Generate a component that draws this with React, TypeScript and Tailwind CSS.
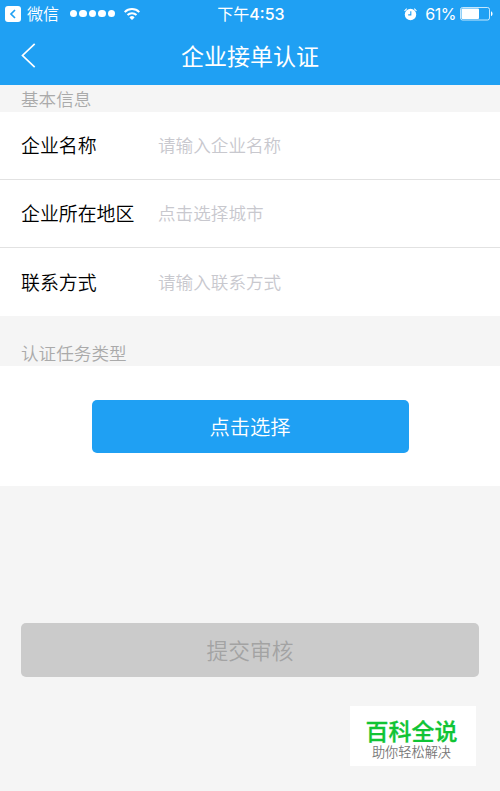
interface FieldRowProps {
  label: string;
  placeholder: string;
}

const fields: FieldRowProps[] = [
  { label: '企业名称', placeholder: '请输入企业名称' },
  { label: '企业所在地区', placeholder: '点击选择城市' },
  { label: '联系方式', placeholder: '请输入联系方式' },
];

function StatusBar() {
  return (
    <div className="grid grid-cols-[1fr_auto_1fr] items-center h-[27px] pl-[5px] pr-[7px]">
      <div className="flex items-center">
        <svg className="w-4 h-4" viewBox="0 0 16 16">
          <rect width="16" height="16" rx="3" fill="#fff" />
          <path d="M10 4 6 8l4 4" fill="none" stroke="#1fa0f3" strokeWidth="1.7" />
        </svg>
        <span className="ml-1.5 w-8 text-[16px] font-[350] leading-none -translate-y-px">微信</span>
        <div className="flex ml-[11px] gap-[2px]">
          {[0, 1, 2, 3, 4].map((dot) => (
            <span key={dot} className="w-[7.4px] h-[7.4px] rounded-full bg-white" />
          ))}
        </div>
        <svg className="ml-[9px] w-4 h-3" viewBox="0 0 16 12" fill="none" stroke="#fff" strokeWidth="2">
          <path d="M.7 4.1a10.3 10.3 0 0 1 14.6 0" />
          <path d="M3.5 7a6.4 6.4 0 0 1 9 0" />
          <path d="M8 12 5.4 9.4a3.7 3.7 0 0 1 5.2 0z" fill="#fff" stroke="none" />
        </svg>
      </div>
      <span className="flex items-center pl-[4px] font-medium leading-none">
        <span className="text-[16px] font-normal -translate-y-px">下午</span>
        <span className="font-['Inter',sans-serif] text-[16px]">4:53</span>
      </span>
      <div className="flex items-center justify-end">
        <svg className="w-[14px] h-[14px]" viewBox="0 0 14 14">
          <circle cx="7.5" cy="7.5" r="5.7" fill="#fff" />
          <path d="M1.5 4 3.7 1.6M13.5 4l-2.2-2.4" stroke="#fff" strokeWidth="1.1" />
          <path d="M7.8 4.3v3.6H5.2" fill="none" stroke="#1fa0f3" strokeWidth="1.1" />
        </svg>
        <span className="ml-2 text-[16px] font-['Inter',sans-serif] leading-none tracking-[-0.5px]">61%</span>
        <svg className="ml-1 w-[33px] h-[14px]" viewBox="0 0 33 14">
          <rect x=".5" y=".5" width="29" height="12.5" rx="2" fill="none" stroke="#fff" strokeOpacity=".75" />
          <rect x="1.5" y="1.5" width="17.5" height="10.5" rx="1" fill="#fff" />
          <path d="M31 4.3c2 .8 2 4.2 0 5z" fill="#fff" />
        </svg>
      </div>
    </div>
  );
}

function FieldRow({ label, placeholder }: FieldRowProps) {
  return (
    <div className="flex items-center h-[68px] px-[21px]">
      <span className="w-[137px] text-[18.9px] font-[350] text-black">{label}</span>
      <span className="text-[17.6px] font-[350] text-[#c8c8ce]">{placeholder}</span>
    </div>
  );
}

export default function App() {
  return (
    <div className="relative flex flex-col w-[500px] h-[791px] overflow-hidden bg-[#f5f5f5] font-['Noto_Sans_CJK_SC',sans-serif] whitespace-nowrap">
      <header className="h-[85px] shrink-0 bg-[#1fa0f3] text-white">
        <StatusBar />
        <div className="grid grid-cols-[60px_1fr_60px] items-center h-14">
          <svg className="ml-[21px] w-[15px] h-[25px]" viewBox="0 0 15 25" fill="none" stroke="#fff" strokeWidth="1.7">
            <path d="M13.7.8 1.5 12.5l12.2 11.7" />
          </svg>
          <h1 className="text-center text-[23px] font-normal leading-none">企业接单认证</h1>
        </div>
      </header>

      <div className="flex items-center h-[27px] px-[21px] text-[17.6px] font-[350] leading-none text-[#aaa]">
        基本信息
      </div>
      <section className="h-[204px] bg-white divide-y divide-[#e2e2e2]">
        {fields.map((field) => (
          <FieldRow key={field.label} {...field} />
        ))}
      </section>

      <div className="flex items-end h-[50px] px-[21px] pb-1 text-[17.6px] font-[350] leading-none text-[#aaa]">
        认证任务类型
      </div>
      <section className="flex justify-center h-[120px] pt-[34px] bg-white">
        <button className="w-[317px] h-[53px] rounded-[5px] bg-[#1fa0f3] text-[20.3px] font-[350] leading-none text-white">
          点击选择
        </button>
      </section>

      <button className="mx-[21px] mt-[137px] h-[54px] shrink-0 rounded-[5px] bg-[#cbcbcb] text-[21.7px] font-[350] leading-none text-[#a3a3a3]">
        提交审核
      </button>

      <div className="absolute left-[350px] top-[706px] flex flex-col items-center w-[126px] h-[60px] pt-[13px] pr-[3px] bg-white">
        <span className="text-[23px] font-medium leading-none text-[#10c434] [-webkit-text-stroke:0.3px_#10c434]">百科全说</span>
        <span className="mt-[3px] text-[13.2px] font-[350] leading-none text-[#777]">助你轻松解决</span>
      </div>
    </div>
  );
}
